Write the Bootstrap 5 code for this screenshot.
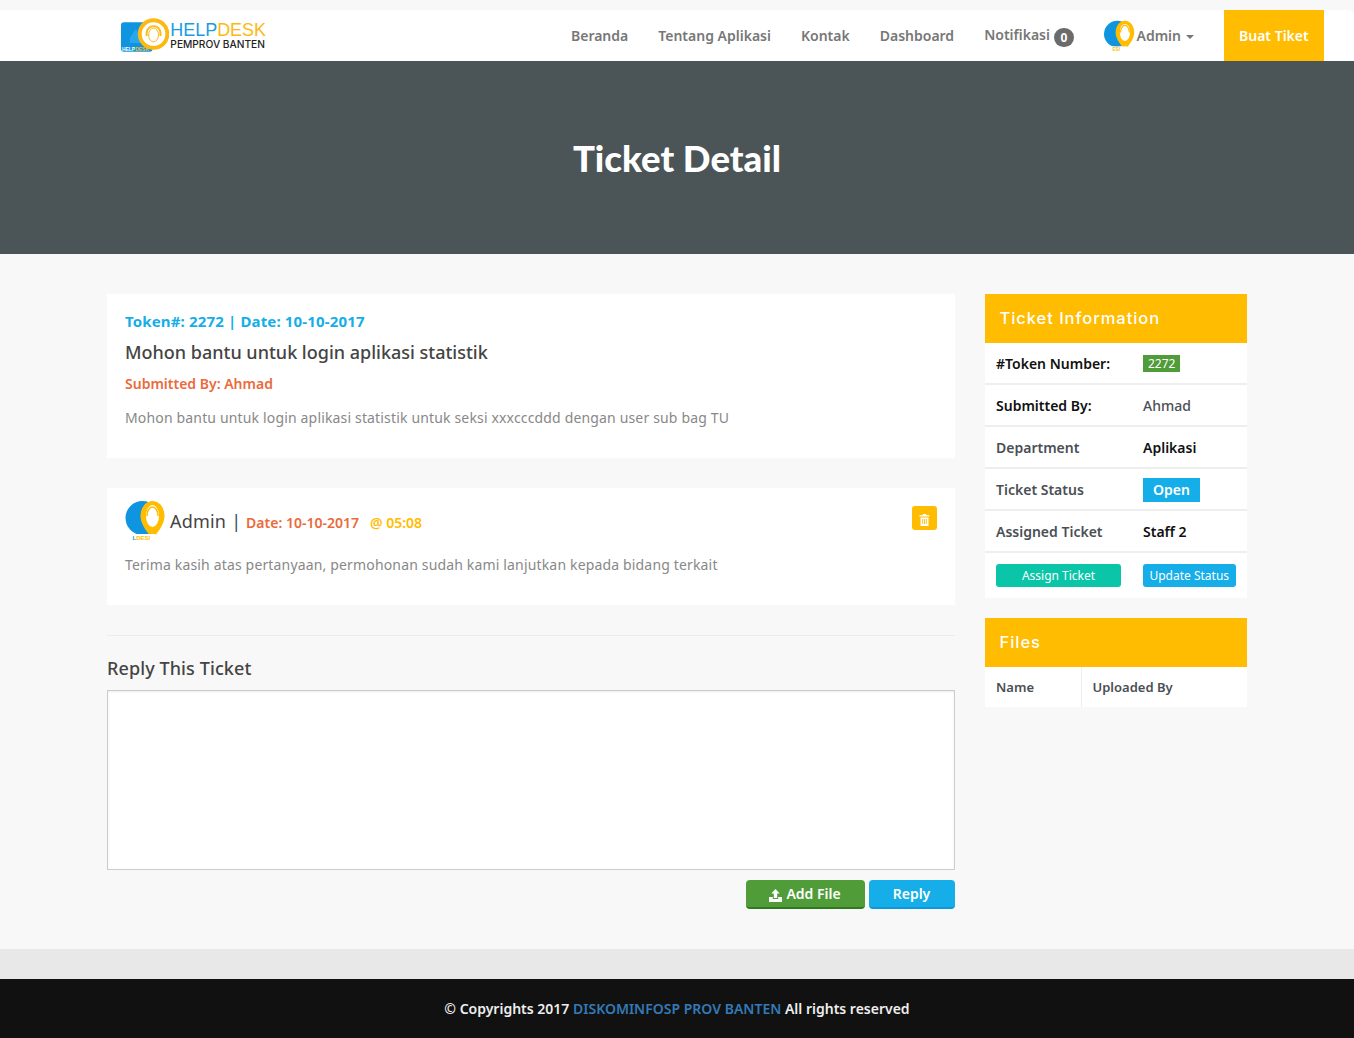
<!DOCTYPE html>
<html lang="id"><head><meta charset="utf-8"><title>Ticket Detail</title>
<link href="https://cdn.jsdelivr.net/npm/bootstrap@5.3.0/dist/css/bootstrap.min.css" rel="stylesheet">
<style>
body{font-family:"Noto Sans",sans-serif;background:#f8f8f8;font-size:14px;color:#444;padding-top:10px}
a{text-decoration:none}
.top-nav{background:#fff;height:51px;padding:0 30px 0 121px;border-radius:0 6px 0 0}
.logo-box{width:145px}
.logo-title{font-family:"Liberation Sans",sans-serif;font-size:18px;line-height:16px;color:#1b9be0;margin:1px 0 0 1px;letter-spacing:-.05px}
.logo-title b{font-weight:400;color:#fdb913}
.logo-sub{font-family:Inter,sans-serif;font-size:10.2px;line-height:12px;color:#222;font-weight:500;margin-left:1px;white-space:nowrap}
.nav-item-x{color:#777;font-weight:600;font-size:14px;margin-right:30px}
.nav-note{position:relative;top:-1px}
.count-pill{background:#6b6b6b;color:#fff;font-size:12px;font-weight:700;padding:2px 7px;border-radius:10px;display:inline-block;line-height:15px;position:relative;top:2px}
.nav-avatar{margin-right:1px}
.nav-caret{display:inline-block;border-top:4px solid #777;border-left:4px solid transparent;border-right:4px solid transparent;margin-left:5px;vertical-align:middle}
.new-ticket{background:#ffbc00;color:#fff;font-weight:600;height:51px;padding:0 15px;line-height:51px;width:100px;white-space:nowrap}
.hero-band{background:#4b5456;height:193px}
.hero-band h1{font-family:Lato,sans-serif;font-weight:900;font-size:36.5px;color:#fff;margin:0;padding-top:2px}
.page-wrap{width:1170px;margin:0 auto;padding:40px 15px}
.page-row{--bs-gutter-x:30px}
.white-box{background:#fff;padding:18px;margin-bottom:30px}
.box-one{height:164px;padding-top:17px}
.box-two{height:117px;padding-top:12px}
.token-line{color:#15aee8;font-weight:700;font-size:15px;letter-spacing:.15px;line-height:20px;margin-bottom:8px}
.ticket-title{font-size:18px;font-weight:500;line-height:26px;margin:0 0 9px;color:#444}
.by-line{color:#ea6a3c;font-weight:600;font-size:14px;line-height:20px;margin-bottom:14px}
.body-text{color:#888;font-size:14px;line-height:20px;margin:0;letter-spacing:.16px}
.author-row{margin-bottom:15px}
.author-name{font-size:18px;line-height:26px;color:#444;font-weight:400;letter-spacing:.2px;padding-top:2px}
.author-sep{font-size:18px;color:#33475b;margin:0 5px;padding-top:2px}
.author-date{color:#ea6a3c;font-weight:600;padding-top:4px}
.author-time{color:#ffbc00;font-weight:600;margin-left:11px;padding-top:4px}
.trash-btn{background:#ffbc00;width:25px;height:24px;border-radius:3px;border:0;padding:0;margin-top:6px}
.reply-rule{border:0;border-top:1px solid #ececec;opacity:1;margin:0 0 19px}
.reply-head{font-size:18px;font-weight:500;letter-spacing:.1px;line-height:26px;margin:0 0 9px;color:#444}
.reply-area{display:block;width:100%;height:180px;border:1px solid #ccc;background:#fff;resize:none;box-shadow:inset 0 1px 2px rgba(0,0,0,.08)}
.act-row{margin-top:10px}
.act-btn{color:#fff;border:0;font-weight:600;font-size:14px;height:29px;border-radius:4px;padding:0;line-height:27px}
.act-green{background:#4f9c38;border-bottom:2px solid #2f7a20;width:119px}
.act-blue{background:#15aee8;border-bottom:2px solid #0e98dc;width:86px}
.side-head{background:#ffbc00;color:#fff;font-family:Inter,sans-serif;font-size:16.5px;line-height:49px;height:49px;padding:0 15px;letter-spacing:.95px;font-weight:500}
.side-table{background:#fff;margin-bottom:20px}
.side-row{height:42px;border-bottom:2px solid #eee;padding:0 11.5px;font-weight:600;color:#4a4f55}
.side-row:last-child{border-bottom:0;height:45px;padding-bottom:1px}
.side-key{width:147px;flex:none}
.side-val{color:#4a4f55;font-weight:500}
.strong-txt{color:#111}
.tag-green{background:#4f9c38;color:#fff;font-size:12px;font-weight:400;padding:0 5px;line-height:17px;display:inline-block}
.tag-blue{background:#15aee8;color:#fff;padding:0 10px;line-height:24px;display:inline-block;font-size:14px;margin-top:2px}
.mini-btn{color:#fff;font-size:12px;height:23px;line-height:23px;border-radius:3px;text-align:center;font-weight:400;display:block}
.mini-teal{background:#0ac5a8;width:125px}
.mini-blue{background:#15aee8;width:93px}
.files-row{height:40px;font-weight:600;color:#4a4f55;font-size:13px}
.files-a{width:97px;padding-left:11.5px;line-height:40px;border-right:1px solid #eee}
.files-b{padding-left:11px;line-height:40px}
.grey-band{background:#e8e8e8;height:30px}
.foot-bar{background:#111;height:59px;line-height:59px;color:#eee;font-weight:600;text-align:center}
.foot-bar a{color:#337ab7}
</style></head><body>
<nav class="top-nav d-flex align-items-center justify-content-between">
 <a href="#" class="d-flex align-items-center logo-box">
  <svg width="49" height="36" viewBox="0 0 49 36"><rect x="0" y="4" width="32" height="30" rx="3" fill="#0f95e0"/><path d="M9 20l6-9 6 9v5H9z" fill="#2aa6ea"/><circle cx="33" cy="16" r="14" fill="#fff" stroke="#fdb913" stroke-width="4"/><path d="M26 18v-3a7 7 0 0 1 14 0v3" fill="none" stroke="#fdb913" stroke-width="2"/><ellipse cx="33" cy="17" rx="5" ry="7" fill="#fff" stroke="#fdb913" stroke-width="1"/><text x="1" y="33.500" font-size="5" font-family="Liberation Sans" font-weight="700" fill="#fff">HELP<tspan fill="#fdb913">DESK</tspan></text></svg>
  <span class="d-flex flex-column"><span class="logo-title">HELP<b>DESK</b></span><span class="logo-sub">PEMPROV BANTEN</span></span>
 </a>
 <div class="d-flex align-items-center">
  <a class="nav-item-x" href="#">Beranda</a>
  <a class="nav-item-x" href="#">Tentang Aplikasi</a>
  <a class="nav-item-x" href="#">Kontak</a>
  <a class="nav-item-x" href="#">Dashboard</a>
  <a class="nav-item-x nav-note" href="#">Notifikasi <span class="count-pill">0</span></a>
  <a class="nav-item-x d-flex align-items-center" href="#">
   <svg width="31" height="31" viewBox="0 0 40 40" class="nav-avatar"><circle cx="17" cy="18" r="17" fill="#0f95e0"/><path d="M27 1c7 0 12 7 12 15 0 7-5 14-9 19l-3 3-3-3c-4-5-9-12-9-19C15 8 20 1 27 1z" fill="#ffbc00"/><ellipse cx="27" cy="16" rx="6.500" ry="11" fill="#fff"/><path d="M21.500 16a5.500 9 0 0 1 11 0" fill="none" stroke="#ffbc00" stroke-width="1.500"/><rect x="6" y="34" width="24" height="6" fill="#fff"/><text x="11" y="39.500" font-size="6" font-family="Liberation Sans" font-weight="700" fill="#ffbc00">ESI</text></svg>
   <span>Admin<span class="nav-caret"></span></span></a>
  <a class="new-ticket" href="#">Buat Tiket</a>
 </div>
</nav>
<header class="hero-band d-flex align-items-center justify-content-center"><h1>Ticket Detail</h1></header>
<main class="page-wrap">
 <div class="row page-row">
  <div class="col-9">
   <section class="white-box box-one">
    <div class="token-line">Token#: 2272 | Date: 10-10-2017</div>
    <h2 class="ticket-title">Mohon bantu untuk login aplikasi statistik</h2>
    <div class="by-line">Submitted By: Ahmad</div>
    <p class="body-text">Mohon bantu untuk login aplikasi statistik untuk seksi xxxcccddd dengan user sub bag TU</p>
   </section>
   <section class="white-box box-two">
    <div class="d-flex justify-content-between align-items-start author-row">
     <div class="d-flex align-items-center">
      <svg width="41" height="40" viewBox="0 0 40 40" class="me-1"><circle cx="17" cy="18" r="17" fill="#0f95e0"/><path d="M27 1c7 0 12 7 12 15 0 7-5 14-9 19l-3 3-3-3c-4-5-9-12-9-19C15 8 20 1 27 1z" fill="#ffbc00"/><ellipse cx="27" cy="16" rx="6.500" ry="11" fill="#fff"/><path d="M21.500 16a5.500 9 0 0 1 11 0" fill="none" stroke="#ffbc00" stroke-width="1.500"/><rect x="4" y="34" width="26" height="6" fill="#fff"/><text x="7" y="39.500" font-size="6" font-family="Liberation Sans" font-weight="700" fill="#0f95e0">L<tspan fill="#ffbc00">DESI</tspan></text></svg>
      <span class="author-name">Admin</span><span class="author-sep">|</span><span class="author-date">Date: 10-10-2017</span><span class="author-time">@ 05:08</span>
     </div>
     <button class="trash-btn" aria-label="Hapus"><svg width="11" height="12" viewBox="0 0 11 12"><path d="M4 0h3l.6 1.200H10.500v1.300H.5V1.200h2.900zM1.500 3.500h8V12h-8z" fill="#fff"/><path d="M3.700 5v5M5.500 5v5M7.300 5v5" stroke="#ffbc00" stroke-width=".9"/></svg></button>
    </div>
    <p class="body-text">Terima kasih atas pertanyaan, permohonan sudah kami lanjutkan kepada bidang terkait</p>
   </section>
   <hr class="reply-rule">
   <h3 class="reply-head">Reply This Ticket</h3>
   <textarea class="reply-area"></textarea>
   <div class="d-flex justify-content-end gap-1 act-row">
    <button class="act-btn act-green"><svg width="13" height="13" viewBox="0 0 13 13" class="me-1"><path d="M6.500 0l4.200 4.500H8.200V9H4.800V4.500H2.300zM0 8h3.800v2h5.400V8H13v5H0z" fill="#fff"/></svg>Add File</button>
    <button class="act-btn act-blue">Reply</button>
   </div>
  </div>
  <aside class="col-3">
   <div class="side-head">Ticket Information</div>
   <div class="side-table">
    <div class="side-row d-flex align-items-center"><span class="side-key strong-txt">#Token Number:</span><span class="tag-green">2272</span></div>
    <div class="side-row d-flex align-items-center"><span class="side-key strong-txt">Submitted By:</span><span class="side-val">Ahmad</span></div>
    <div class="side-row d-flex align-items-center"><span class="side-key">Department</span><span class="strong-txt">Aplikasi</span></div>
    <div class="side-row d-flex align-items-center"><span class="side-key">Ticket Status</span><span class="tag-blue">Open</span></div>
    <div class="side-row d-flex align-items-center"><span class="side-key">Assigned Ticket</span><span class="strong-txt">Staff 2</span></div>
    <div class="side-row d-flex align-items-center"><span class="side-key"><a class="mini-btn mini-teal" href="#">Assign Ticket</a></span><a class="mini-btn mini-blue" href="#">Update Status</a></div>
   </div>
   <div class="side-head">Files</div>
   <div class="side-table d-flex files-row"><div class="files-a">Name</div><div class="files-b">Uploaded By</div></div>
  </aside>
 </div>
</main>
<div class="grey-band"></div>
<footer class="foot-bar">© Copyrights 2017 <a href="#">DISKOMINFOSP PROV BANTEN</a> All rights reserved</footer>
</body></html>
